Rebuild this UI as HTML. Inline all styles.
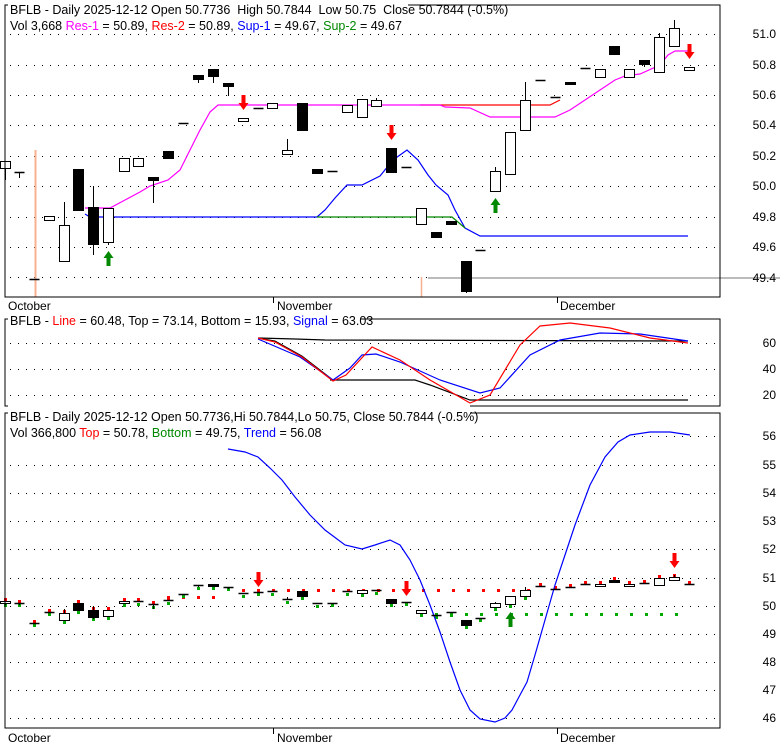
<!DOCTYPE html>
<html><head><meta charset="utf-8"><style>
body{margin:0;background:#fff;width:780px;height:745px;overflow:hidden}
svg{display:block;font-family:"Liberation Sans",Arial,sans-serif}
</style></head><body>
<svg id="s" width="780" height="745" viewBox="0 0 780 745" xmlns="http://www.w3.org/2000/svg">
<g id="grid" stroke="#000" stroke-width="1" stroke-dasharray="1,7"></g>
<line x1="35.5" y1="150" x2="35.5" y2="297" stroke="#f9b090" stroke-width="2"/>
<line x1="421.5" y1="277" x2="421.5" y2="297" stroke="#f9b090" stroke-width="1.5"/>
<line x1="428" y1="278" x2="780" y2="278" stroke="#bbb" stroke-width="2"/>
<polyline fill="none" stroke="#0000ff" stroke-width="1.2" points="85,214 90,217 317,217 325,210 335,198 347,185 362,185 380,176 393,160 400,155 407,150 418,160 428,175 436,185 448,195 455,210 465,228 480,236 688,236"/>
<polyline fill="none" stroke="#008800" stroke-width="1.2" points="317,217 452,217 465,228"/>
<polyline fill="none" stroke="#ff0000" stroke-width="1.2" points="420,105 550,105 560,100"/>
<polyline fill="none" stroke="#ff00ff" stroke-width="1.2" points="85,208 110,208 125,200 140,192 150,186 168,180 180,170 190,150 200,130 210,112 218,105 420,105 440,105 445,107 470,108 490,117 555,117 570,110 585,100 600,90 615,80 625,76 640,74 660,65 668,55 675,51 690,51"/>
<g id="c1"></g>
<rect x="5" y="5" width="715" height="292" fill="none" stroke="#000"/>
<rect x="8" y="0" width="400" height="34" fill="#fff"/>
<line x1="5" y1="5" x2="5" y2="297" stroke="#000"/>
<text x="10" y="14" font-size="12.5">BFLB - Daily 2025-12-12 Open 50.7736&#160; High 50.7844&#160; Low 50.75&#160; Close 50.7844 (-0.5%)</text>
<text x="10" y="30" font-size="12.5">Vol 3,668 <tspan fill="#ff00ff">Res-1</tspan> = 50.89, <tspan fill="#ff0000">Res-2</tspan> = 50.89, <tspan fill="#0000ff">Sup-1</tspan> = 49.67, <tspan fill="#008800">Sup-2</tspan> = 49.67</text>
<g font-size="12" text-anchor="end" fill="#000">
<text x="776" y="38">51.0</text><text x="776" y="69">50.8</text><text x="776" y="99">50.6</text><text x="776" y="129">50.4</text><text x="776" y="160">50.2</text><text x="776" y="190">50.0</text><text x="776" y="221">49.8</text><text x="776" y="251">49.6</text><text x="776" y="282">49.4</text>
</g>
<g font-size="12"><text x="8" y="310">October</text><text x="277" y="310">November</text><text x="560" y="310">December</text></g>
<g stroke="#000"><line x1="273.5" y1="297" x2="273.5" y2="303"/><line x1="557.5" y1="297" x2="557.5" y2="303"/><line x1="273.5" y1="728" x2="273.5" y2="734"/><line x1="557.5" y1="728" x2="557.5" y2="734"/></g>
<polyline fill="none" stroke="#000" stroke-width="1.2" points="258,338 295,339 325,340 688,341"/>
<polyline fill="none" stroke="#000" stroke-width="1.2" points="330,380 415,380 430,385 470,400 688,400"/>
<polyline fill="none" stroke="#000" stroke-width="1" points="258,338 275,341 302,356 333,380"/>
<polyline fill="none" stroke="#0000ff" stroke-width="1.2" points="258,339 300,357 333,380 350,368 362,355 376,354 400,362 440,380 480,393 500,388 530,355 560,340 600,333 640,334 688,341"/>
<polyline fill="none" stroke="#ff0000" stroke-width="1.2" points="258,338 275,342 302,357 333,381 346,375 372,347 400,360 430,380 470,403 490,395 520,345 540,326 570,323 610,328 650,338 688,343"/>
<rect x="5" y="319" width="715" height="87" fill="none" stroke="#000"/>
<rect x="8" y="312" width="352" height="14" fill="#fff"/>
<line x1="5" y1="319" x2="5" y2="406" stroke="#000"/>
<text x="10" y="325" font-size="12.5">BFLB - <tspan fill="#ff0000">Line</tspan> = 60.48, Top = 73.14, Bottom = 15.93, <tspan fill="#0000ff">Signal</tspan> = 63.03</text>
<g font-size="12" text-anchor="end"><text x="776" y="347">60</text><text x="776" y="373">40</text><text x="776" y="399">20</text></g>
<g id="dots"></g>
<polyline fill="none" stroke="#0000ff" stroke-width="1.2" points="228,449 245,452 258,457 270,468 282,480 295,497 310,515 325,530 345,545 362,549 375,545 390,540 400,545 410,560 420,580 430,605 440,632 450,662 460,690 470,710 480,719 495,722 505,718 512,710 520,695 527,682 535,655 545,620 555,585 565,555 575,525 590,485 605,457 618,442 630,435 650,432 670,432 690,435"/>
<g id="c2"></g>
<rect x="5" y="413" width="715" height="315" fill="none" stroke="#000"/>
<rect x="8" y="405" width="462" height="34" fill="#fff"/>
<line x1="5" y1="413" x2="5" y2="728" stroke="#000"/>
<text x="10" y="421" font-size="12.5">BFLB - Daily 2025-12-12 Open 50.7736,Hi 50.7844,Lo 50.75, Close 50.7844 (-0.5%)</text>
<text x="10" y="437" font-size="12.5">Vol 366,800 <tspan fill="#ff0000">Top</tspan> = 50.78, <tspan fill="#008800">Bottom</tspan> = 49.75, <tspan fill="#0000ff">Trend</tspan> = 56.08</text>
<g font-size="12" text-anchor="end"><text x="776" y="440">56</text><text x="776" y="469">55</text><text x="776" y="497">54</text><text x="776" y="525">53</text><text x="776" y="553">52</text><text x="776" y="582">51</text><text x="776" y="610">50</text><text x="776" y="638">49</text><text x="776" y="666">48</text><text x="776" y="694">47</text><text x="776" y="722">46</text></g>
<g font-size="12"><text x="8" y="742">October</text><text x="277" y="742">November</text><text x="560" y="742">December</text></g>
<g id="arr"></g>
</svg>
<script>
var NS="http://www.w3.org/2000/svg";
function el(p,t,a){var e=document.createElementNS(NS,t);for(var k in a)e.setAttribute(k,a[k]);document.getElementById(p).appendChild(e);return e;}
[34,65,95,125,156,186,217,247,277].forEach(function(y){el("grid","line",{x1:10,y1:y+.5,x2:720,y2:y+.5});});
[343,369,395].forEach(function(y){el("grid","line",{x1:10,y1:y+.5,x2:720,y2:y+.5});});
[436,465,493,521,549,578,606,634,662,690,718].forEach(function(y){el("grid","line",{x1:10,y1:y+.5,x2:720,y2:y+.5});});
var C=[[5,161,168,0,161,180],[19,172,172,0,172,178],[34,279,279,0,279,279],[49,216,220,0,216,220],[64,225,261,0,202,261],[78,169,210,1,169,210],[93,207,244,1,186,255],[108,208,242,0,208,245],[124,158,171,0,158,171],[138,158,166,0,158,166],[153,177,180,1,177,203],[168,151,158,1,151,158],[183,123,123,0,123,123],[198,75,79,1,75,83],[213,69,76,1,69,83],[228,83,86,1,83,96],[243,118,121,0,118,121],[258,108,108,0,108,108],[272,103,108,0,103,108],[287,150,154,0,139,154],[302,103,130,1,103,130],[317,169,173,1,169,173],[332,171,171,0,171,171],[347,105,112,0,105,112],[362,99,117,0,99,117],[376,100,106,0,98,106],[391,148,172,1,148,172],[406,167,167,0,167,167],[421,208,224,0,208,224],[436,232,237,1,232,237],[451,221,224,1,221,224],[466,261,291,1,261,293],[480,250,250,0,250,250],[495,171,191,0,167,191],[510,132,174,0,132,174],[525,100,130,0,82,130],[540,80,80,0,80,80],[555,97,97,0,97,97],[570,82,84,1,82,84],[585,68,68,0,68,68],[600,69,77,0,69,77],[614,46,54,1,46,54],[629,69,77,0,69,77],[644,60,64,1,60,67],[659,37,72,0,33,72],[674,28,46,0,20,46],[689,67,70,0,67,71]];
function draw(g,c,f){
 var x=c[0]+.5,t=f(c[1]),b=f(c[2]),wt=f(c[4]),wb=f(c[5]);
 if(wt<t)el(g,"line",{x1:x,y1:wt,x2:x,y2:t,stroke:"#000"});
 if(wb>b)el(g,"line",{x1:x,y1:b,x2:x,y2:wb,stroke:"#000"});
 if(b-t<1.5){el(g,"line",{x1:x-5,y1:t+.5,x2:x+5,y2:t+.5,stroke:"#000","stroke-width":1.5});}
 else el(g,"rect",{x:x-5,y:t+.5,width:10,height:b-t,fill:c[3]?"#000":"#fff",stroke:"#000"});
}
C.forEach(function(c){draw("c1",c,function(y){return y;});});
function m(y){return Math.round(577.8+(y-34)*0.1855);}
C.forEach(function(c){draw("c2",c,m);});
for(var x=243;x<=540;x+=15)el("dots","rect",{x:x-1,y:589,width:3,height:3,fill:"#f00"});
for(var x=168;x<=213;x+=15)el("dots","rect",{x:x-1,y:596,width:3,height:3,fill:"#f00"});
for(var x=436;x<=689;x+=15)el("dots","rect",{x:x-1,y:613,width:3,height:3,fill:"#0a0"});
C.forEach(function(c){if(c[0]<540){el("dots","rect",{x:c[0]-1,y:m(c[2])+1,width:3,height:3,fill:"#0a0"});}
 if(c[0]>=540||c[0]<180){el("dots","rect",{x:c[0]-1,y:m(c[1])-3,width:3,height:3,fill:"#f00"});}});
function arrow(x,y,dir,col){
 var s=dir;
 var p=[[x,y],[x-5,y-7*s],[x-2,y-7*s],[x-2,y-15*s],[x+2,y-15*s],[x+2,y-7*s],[x+5,y-7*s]];
 el("arr","polygon",{points:p.map(function(q){return q.join(",")}).join(" "),fill:col});
}
arrow(243.5,110,1,"#f00");arrow(391.5,140,1,"#f00");arrow(689.5,59,1,"#f00");
arrow(108.5,251,-1,"#080");arrow(495.5,198,-1,"#080");
arrow(258.5,587,1,"#f00");arrow(406.5,596,1,"#f00");arrow(674.5,568,1,"#f00");arrow(510.5,612,-1,"#080");
</script>
</body></html>
